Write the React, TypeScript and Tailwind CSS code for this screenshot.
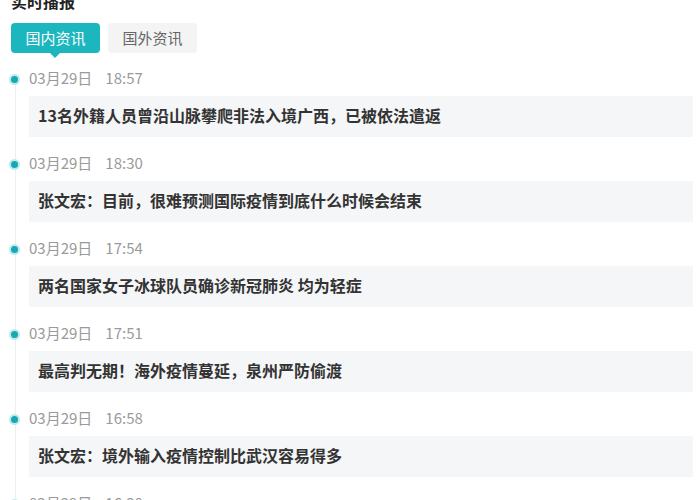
import React from 'react';

const news = [
  { date: '03月29日', time: '18:57', title: '13名外籍人员曾沿山脉攀爬非法入境广西，已被依法遣返' },
  { date: '03月29日', time: '18:30', title: '张文宏：目前，很难预测国际疫情到底什么时候会结束' },
  { date: '03月29日', time: '17:54', title: '两名国家女子冰球队员确诊新冠肺炎 均为轻症' },
  { date: '03月29日', time: '17:51', title: '最高判无期！海外疫情蔓延，泉州严防偷渡' },
  { date: '03月29日', time: '16:58', title: '张文宏：境外输入疫情控制比武汉容易得多' },
  { date: '03月29日', time: '16:30', title: '境外输入疫情防控' },
];

function NewsItem({ item }: { item: (typeof news)[0] }) {
  return (
    <div className="relative pl-[29px] pb-[16px]">
      <div className="absolute left-[15px] top-[11px] bottom-[-11px] w-px bg-[#eeeeee]" />
      <div className="absolute left-[11px] top-[8px] w-[7px] h-[7px] rounded-full bg-[#17a9b3] ring-2 ring-[#bdeaee]" />
      <div className="h-[22px] leading-[20px] text-[15px] text-[#9a9a9a] flex gap-[13px]">
        <span>{item.date}</span>
        <span>{item.time}</span>
      </div>
      <div className="mt-[6px] h-[41px] mr-[7px] bg-[#f5f6f7] pl-[9px] pb-[4px] flex items-center text-[16px] font-bold text-[#333333]">
        {item.title}
      </div>
    </div>
  );
}

export default function App() {
  return (
    <div
      className="w-[700px] h-[500px] overflow-hidden bg-white"
      style={{ fontFamily: '"Microsoft YaHei", "Noto Sans CJK SC", "Noto Sans", sans-serif' }}
    >
      <div className="-mt-[10px] pl-[11px] h-[22px] leading-[22px] text-[16px] font-bold text-[#222222]">实时播报</div>
      <div className="mt-[11px] pl-[11px] flex gap-[8px]">
        <div className="relative w-[89px] h-[30px] rounded-[4px] bg-[#1cb6bf] text-white text-[15px] flex items-center justify-center">
          国内资讯
          <div className="absolute left-[39px] top-[30px] w-0 h-0 border-l-[5px] border-r-[5px] border-t-[5px] border-l-transparent border-r-transparent border-t-[#1cb6bf]" />
        </div>
        <div className="w-[89px] h-[30px] rounded-[4px] bg-[#f4f4f5] text-[#666666] text-[15px] flex items-center justify-center">
          国外资讯
        </div>
      </div>
      <div className="mt-[15px]">
        {news.map((item, i) => (
          <NewsItem item={item} key={i} />
        ))}
      </div>
    </div>
  );
}
